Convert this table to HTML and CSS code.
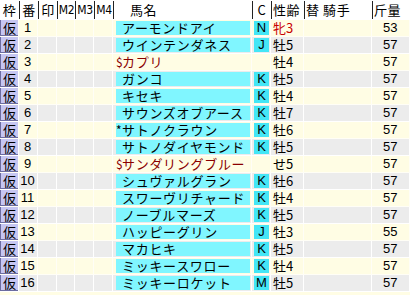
FILE: index.html
```html
<!DOCTYPE html>
<html lang="ja">
<head>
<meta charset="utf-8">
<link rel="stylesheet" href="styles.css">
</head>
<body>
<div class="table">
  <div class="hdr">
    <div class="h ctr">枠</div>
    <div class="h ctr sep">番</div>
    <div class="h ctr sep">印</div>
    <div class="h ctr sep m">M2</div>
    <div class="h ctr sep m">M3</div>
    <div class="h ctr sep m">M4</div>
    <div class="h sep hname">馬名</div>
    <div class="h ctr sep">C</div>
    <div class="h sep hsex">性齢</div>
    <div class="h sep hjk">替 騎手</div>
    <div class="h sep hkin">斤量</div>
  </div>

  <div class="row odd">
    <div class="c waku"><span class="kari">仮</span></div><div class="c num">1</div><div class="c"></div><div class="c"></div><div class="c"></div><div class="c"></div>
    <div class="c nm"><span class="box cy"><span class="pre"></span>アーモンドアイ</span></div>
    <div class="c cc"><span class="tag">N</span></div><div class="c sex red">牝3</div><div class="c"></div><div class="c kin">53</div>
  </div>
  <div class="row even">
    <div class="c waku"><span class="kari">仮</span></div><div class="c num">2</div><div class="c"></div><div class="c"></div><div class="c"></div><div class="c"></div>
    <div class="c nm"><span class="box cy"><span class="pre"></span>ウインテンダネス</span></div>
    <div class="c cc"><span class="tag">J</span></div><div class="c sex">牡5</div><div class="c"></div><div class="c kin">57</div>
  </div>
  <div class="row odd">
    <div class="c waku"><span class="kari">仮</span></div><div class="c num">3</div><div class="c"></div><div class="c"></div><div class="c"></div><div class="c"></div>
    <div class="c nm"><span class="box dark"><span class="pre">$</span>カプリ</span></div>
    <div class="c cc"></div><div class="c sex">牡4</div><div class="c"></div><div class="c kin">57</div>
  </div>
  <div class="row even">
    <div class="c waku"><span class="kari">仮</span></div><div class="c num">4</div><div class="c"></div><div class="c"></div><div class="c"></div><div class="c"></div>
    <div class="c nm"><span class="box cy"><span class="pre"></span>ガンコ</span></div>
    <div class="c cc"><span class="tag">K</span></div><div class="c sex">牡5</div><div class="c"></div><div class="c kin">57</div>
  </div>
  <div class="row odd">
    <div class="c waku"><span class="kari">仮</span></div><div class="c num">5</div><div class="c"></div><div class="c"></div><div class="c"></div><div class="c"></div>
    <div class="c nm"><span class="box cy"><span class="pre"></span>キセキ</span></div>
    <div class="c cc"><span class="tag">K</span></div><div class="c sex">牡4</div><div class="c"></div><div class="c kin">57</div>
  </div>
  <div class="row even">
    <div class="c waku"><span class="kari">仮</span></div><div class="c num">6</div><div class="c"></div><div class="c"></div><div class="c"></div><div class="c"></div>
    <div class="c nm"><span class="box cy"><span class="pre"></span>サウンズオブアース</span></div>
    <div class="c cc"><span class="tag">K</span></div><div class="c sex">牡7</div><div class="c"></div><div class="c kin">57</div>
  </div>
  <div class="row odd">
    <div class="c waku"><span class="kari">仮</span></div><div class="c num">7</div><div class="c"></div><div class="c"></div><div class="c"></div><div class="c"></div>
    <div class="c nm"><span class="box cy"><span class="pre">*</span>サトノクラウン</span></div>
    <div class="c cc"><span class="tag">K</span></div><div class="c sex">牡6</div><div class="c"></div><div class="c kin">57</div>
  </div>
  <div class="row even">
    <div class="c waku"><span class="kari">仮</span></div><div class="c num">8</div><div class="c"></div><div class="c"></div><div class="c"></div><div class="c"></div>
    <div class="c nm"><span class="box cy"><span class="pre"></span>サトノダイヤモンド</span></div>
    <div class="c cc"><span class="tag">K</span></div><div class="c sex">牡5</div><div class="c"></div><div class="c kin">57</div>
  </div>
  <div class="row odd">
    <div class="c waku"><span class="kari">仮</span></div><div class="c num">9</div><div class="c"></div><div class="c"></div><div class="c"></div><div class="c"></div>
    <div class="c nm"><span class="box dark"><span class="pre">$</span>サンダリングブルー</span></div>
    <div class="c cc"></div><div class="c sex">せ5</div><div class="c"></div><div class="c kin">57</div>
  </div>
  <div class="row even">
    <div class="c waku"><span class="kari">仮</span></div><div class="c num">10</div><div class="c"></div><div class="c"></div><div class="c"></div><div class="c"></div>
    <div class="c nm"><span class="box cy"><span class="pre"></span>シュヴァルグラン</span></div>
    <div class="c cc"><span class="tag">K</span></div><div class="c sex">牡6</div><div class="c"></div><div class="c kin">57</div>
  </div>
  <div class="row odd">
    <div class="c waku"><span class="kari">仮</span></div><div class="c num">11</div><div class="c"></div><div class="c"></div><div class="c"></div><div class="c"></div>
    <div class="c nm"><span class="box cy"><span class="pre"></span>スワーヴリチャード</span></div>
    <div class="c cc"><span class="tag">K</span></div><div class="c sex">牡4</div><div class="c"></div><div class="c kin">57</div>
  </div>
  <div class="row even">
    <div class="c waku"><span class="kari">仮</span></div><div class="c num">12</div><div class="c"></div><div class="c"></div><div class="c"></div><div class="c"></div>
    <div class="c nm"><span class="box cy"><span class="pre"></span>ノーブルマーズ</span></div>
    <div class="c cc"><span class="tag">K</span></div><div class="c sex">牡5</div><div class="c"></div><div class="c kin">57</div>
  </div>
  <div class="row odd">
    <div class="c waku"><span class="kari">仮</span></div><div class="c num">13</div><div class="c"></div><div class="c"></div><div class="c"></div><div class="c"></div>
    <div class="c nm"><span class="box cy"><span class="pre"></span>ハッピーグリン</span></div>
    <div class="c cc"><span class="tag">J</span></div><div class="c sex">牡3</div><div class="c"></div><div class="c kin">55</div>
  </div>
  <div class="row even">
    <div class="c waku"><span class="kari">仮</span></div><div class="c num">14</div><div class="c"></div><div class="c"></div><div class="c"></div><div class="c"></div>
    <div class="c nm"><span class="box cy"><span class="pre"></span>マカヒキ</span></div>
    <div class="c cc"><span class="tag">K</span></div><div class="c sex">牡5</div><div class="c"></div><div class="c kin">57</div>
  </div>
  <div class="row odd">
    <div class="c waku"><span class="kari">仮</span></div><div class="c num">15</div><div class="c"></div><div class="c"></div><div class="c"></div><div class="c"></div>
    <div class="c nm"><span class="box cy"><span class="pre"></span>ミッキースワロー</span></div>
    <div class="c cc"><span class="tag">K</span></div><div class="c sex">牡4</div><div class="c"></div><div class="c kin">57</div>
  </div>
  <div class="row even">
    <div class="c waku"><span class="kari">仮</span></div><div class="c num">16</div><div class="c"></div><div class="c"></div><div class="c"></div><div class="c"></div>
    <div class="c nm"><span class="box cy"><span class="pre"></span>ミッキーロケット</span></div>
    <div class="c cc"><span class="tag">M</span></div><div class="c sex">牡5</div><div class="c"></div><div class="c kin">57</div>
  </div>
  <div class="row odd filler"></div>
</div>
</body>
</html>
```

FILE: styles.css
```css
html, body {
  margin: 0;
  padding: 0;
  background: #ffffff;
}

.table {
  width: 410px;
  height: 295px;
  overflow: hidden;
  font-family: "Noto Sans CJK JP", "Noto Sans", sans-serif;
  font-size: 13px;
  color: #000;
}

.hdr,
.row {
  display: grid;
  grid-template-columns: 19px 19px 19px 18px 19px 19px 139px 19px 33px 68px 38px;
}

.hdr {
  height: 20px;
  align-items: start;
  background: #fff;
}

.h {
  height: 18px;
  margin-top: 1px;
  line-height: 18px;
  white-space: nowrap;
  letter-spacing: 0.6px;
}

.h.m {
  font-size: 12px;
  letter-spacing: -0.3px;
  font-family: "DejaVu Sans Condensed", "DejaVu Sans", sans-serif;
}

.h.sep {
  border-left: 1px solid #222;
}

.h.ctr {
  text-align: center;
}

.hname { padding-left: 16px; }
.hsex { padding-left: 1px; }
.hjk { padding-left: 1px; }
.hkin { padding-left: 1px; }

.row {
  height: 17px;
}

.row.odd { background: #fffde4; }
.row.even { background: #ececec; }

.c {
  border-right: 1px solid #fff;
  border-bottom: 1px solid #fff;
  line-height: 16px;
  white-space: nowrap;
}

.row.odd .c {
  border-color: #fffef6;
}

.waku {
  display: flex;
}

.kari {
  flex: 1;
  background: #c6c6f2;
  border-left: 1px solid #6c6ca0;
  border-bottom: 1px solid #6c6ca0;
  text-align: center;
  line-height: 15px;
}

.num {
  text-align: center;
  padding-right: 1px;
  font-family: "Liberation Sans", Arial, sans-serif;
  font-size: 13px;
}

.nm {
  padding: 1px 1px 1px 3px;
}

.box {
  display: block;
  height: 14px;
  line-height: 14px;
  letter-spacing: 0.7px;
}

.box.cy { background: #80f6ff; }
.box.dark { color: #8a0000; }

.pre {
  display: inline-block;
  width: 6px;
  font-size: 12px;
  letter-spacing: 0;
  vertical-align: top;
}

.cc {
  padding: 1px 1px 1px 2px;
}

.tag {
  display: block;
  height: 14px;
  line-height: 14px;
  background: #44e6f6;
  text-align: center;
  font-family: "Liberation Sans", Arial, sans-serif;
  font-size: 13px;
}

.sex {
  padding-left: 2px;
}

.red { color: #c80000; }

.kin {
  padding-left: 11px;
  font-family: "Liberation Sans", Arial, sans-serif;
  font-size: 13px;
}
```
